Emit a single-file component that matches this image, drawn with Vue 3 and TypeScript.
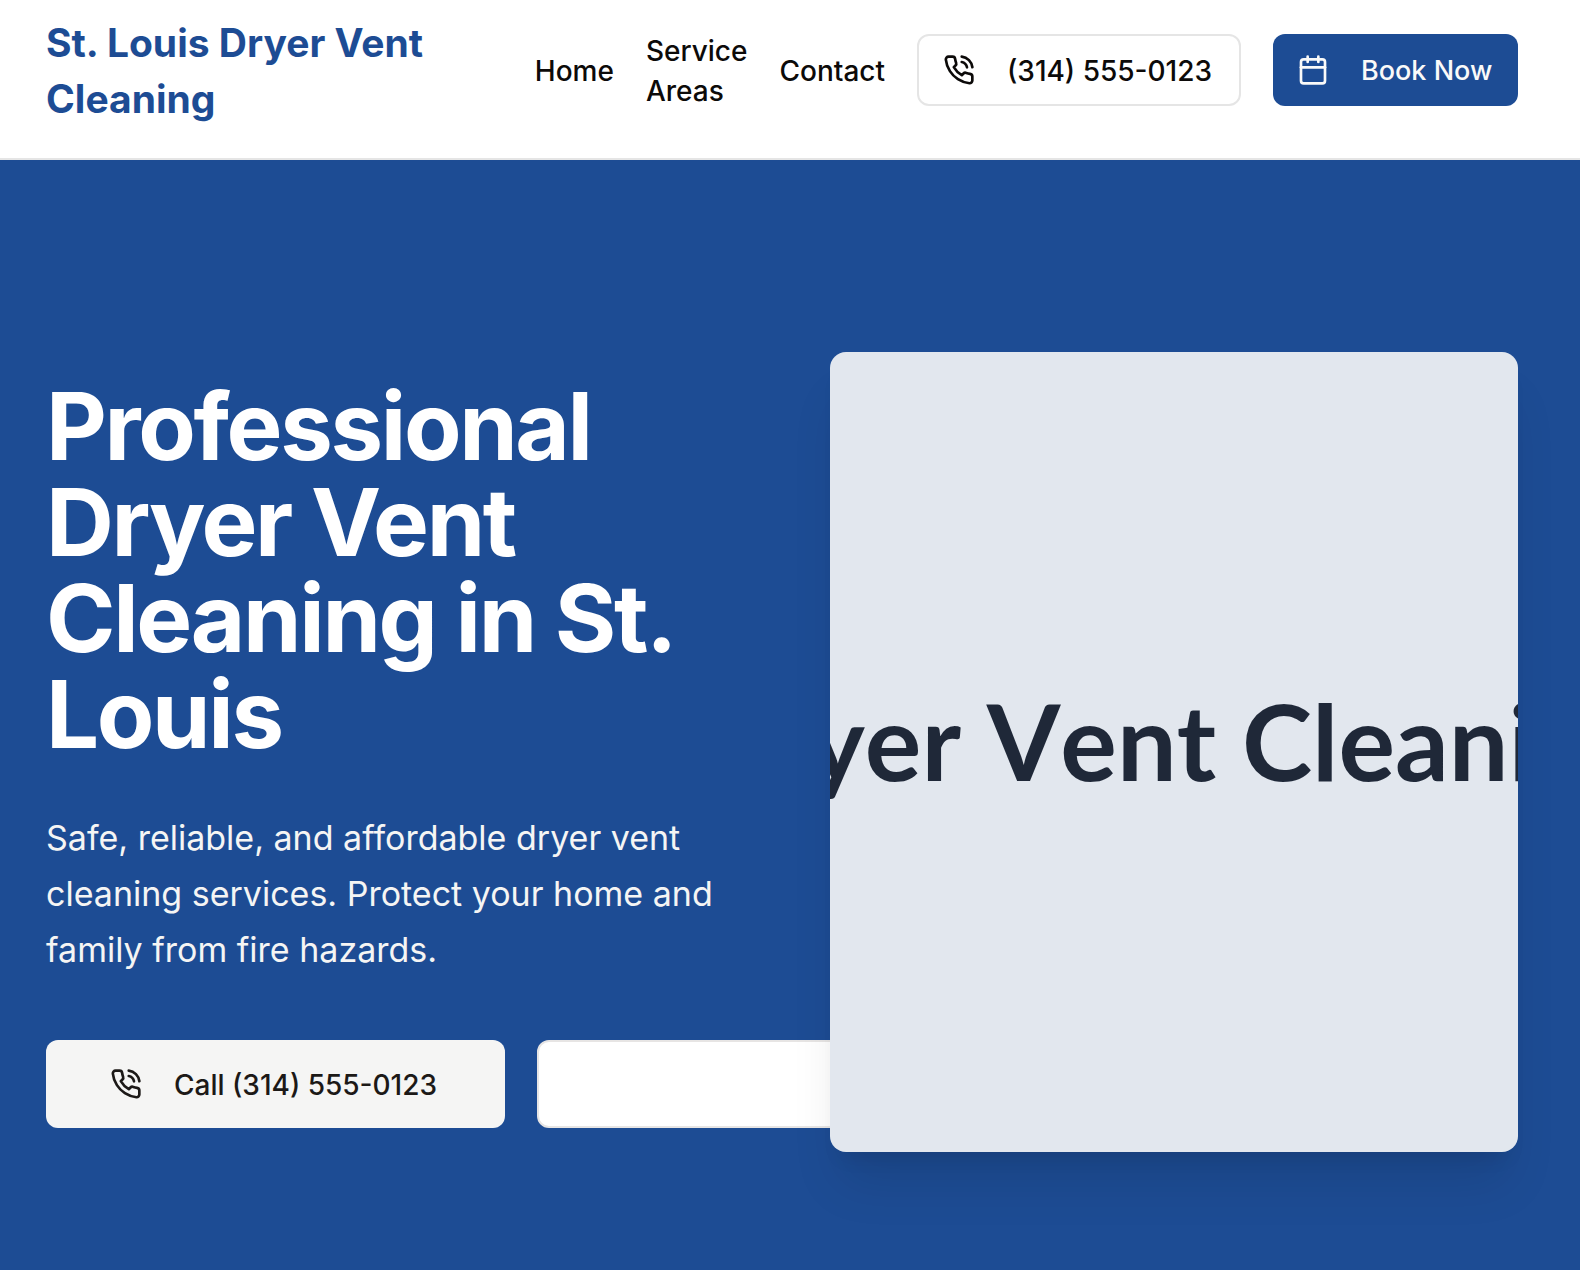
<script setup lang="ts">
interface NavLink {
  label: string
  href: string
}

const phone = '(314) 555-0123'
const phoneHref = 'tel:+13145550123'

const links: NavLink[] = [
  { label: 'Home', href: '#home' },
  { label: 'Service Areas', href: '#areas' },
  { label: 'Contact', href: '#contact' },
]
</script>

<template>
  <div class="page">
    <header class="header">
      <a class="brand" href="#home">St. Louis Dryer Vent Cleaning</a>
      <nav class="nav">
        <a v-for="link in links" :key="link.href" class="nav-link" :href="link.href">{{ link.label }}</a>
        <a class="btn btn-outline" :href="phoneHref">
          <svg class="icon" viewBox="0 0 24 24" aria-hidden="true">
            <path d="M22 16.92v3a2 2 0 0 1-2.18 2 19.79 19.79 0 0 1-8.63-3.07 19.5 19.5 0 0 1-6-6 19.79 19.79 0 0 1-3.07-8.67A2 2 0 0 1 4.11 2h3a2 2 0 0 1 2 1.72 12.84 12.84 0 0 0 .7 2.81 2 2 0 0 1-.45 2.11L8.09 9.91a16 16 0 0 0 6 6l1.27-1.27a2 2 0 0 1 2.11-.45 12.84 12.84 0 0 0 2.81.7A2 2 0 0 1 22 16.92z" />
            <path d="M14.05 2a9 9 0 0 1 8 7.94" />
            <path d="M14.05 6A5 5 0 0 1 18 10" />
          </svg>
          <span class="btn-label">{{ phone }}</span>
        </a>
        <button class="btn btn-primary" type="button">
          <svg class="icon" viewBox="0 0 24 24" aria-hidden="true">
            <path d="M8 2v4" />
            <path d="M16 2v4" />
            <rect width="18" height="18" x="3" y="4" rx="2" />
            <path d="M3 10h18" />
          </svg>
          <span class="btn-label">Book Now</span>
        </button>
      </nav>
    </header>

    <main id="home" class="hero">
      <div class="intro">
        <h1 class="title">Professional Dryer Vent Cleaning in St. Louis</h1>
        <p class="lead">
          Safe, reliable, and affordable dryer vent cleaning services. Protect your home and family from fire hazards.
        </p>
        <div class="actions">
          <a class="btn btn-large btn-soft" :href="phoneHref">
            <svg class="icon" viewBox="0 0 24 24" aria-hidden="true">
              <path d="M22 16.92v3a2 2 0 0 1-2.18 2 19.79 19.79 0 0 1-8.63-3.07 19.5 19.5 0 0 1-6-6 19.79 19.79 0 0 1-3.07-8.67A2 2 0 0 1 4.11 2h3a2 2 0 0 1 2 1.72 12.84 12.84 0 0 0 .7 2.81 2 2 0 0 1-.45 2.11L8.09 9.91a16 16 0 0 0 6 6l1.27-1.27a2 2 0 0 1 2.11-.45 12.84 12.84 0 0 0 2.81.7A2 2 0 0 1 22 16.92z" />
              <path d="M14.05 2a9 9 0 0 1 8 7.94" />
              <path d="M14.05 6A5 5 0 0 1 18 10" />
            </svg>
            <span class="btn-label">Call {{ phone }}</span>
          </a>
          <button class="btn btn-large btn-blank" type="button" aria-label="Book"></button>
        </div>
      </div>
      <div class="picture">
        <span class="picture-text">Dryer Vent Cleaning</span>
      </div>
    </main>
  </div>
</template>

<style>
body {
  margin: 0;
}
</style>

<style scoped>
.page {
  --blue: #1d4c94;
  min-height: 100vh;
  display: flex;
  flex-direction: column;
  overflow-x: hidden;
  background: #fff;
  color: #0c0a09;
  font-family: Inter, "Liberation Sans", sans-serif;
}

.page * {
  box-sizing: border-box;
}

.header {
  display: flex;
  align-items: center;
  justify-content: space-between;
  gap: 32px;
  padding: 13px 62px 31px 46px;
  border-bottom: 2px solid #e5e5e5;
}

.brand {
  flex: 1;
  padding-top: 2px;
  color: var(--blue);
  font-size: 39px;
  font-weight: 700;
  line-height: 56px;
  text-decoration: none;
}

.nav {
  display: flex;
  flex-shrink: 0;
  align-items: center;
  gap: 32px;
}

.nav-link {
  width: min-content;
  padding-top: 2px;
  color: inherit;
  font-size: 28px;
  font-weight: 500;
  line-height: 40px;
  text-decoration: none;
}

.btn {
  display: inline-flex;
  flex-shrink: 0;
  align-items: center;
  gap: 32px;
  height: 72px;
  padding: 0 24px;
  border: 0;
  border-radius: 12px;
  font-family: inherit;
  font-size: 28px;
  font-weight: 500;
  line-height: 40px;
  text-decoration: none;
  white-space: nowrap;
}

.btn-label {
  padding-top: 2px;
}

.btn-outline {
  min-width: 324px;
  border: 2px solid #e5e5e5;
  background: #fff;
  color: inherit;
}

.btn-primary {
  min-width: 245px;
  background: var(--blue);
  color: #fafaf9;
  font-size: 27px;
}

.btn-large {
  height: 88px;
  padding: 0 64px;
}

.btn-soft {
  min-width: 459px;
  background: #f5f5f4;
  color: #1c1917;
}

.btn-blank {
  width: 400px;
  border: 2px solid #e7e5e4;
  background: #fff;
}

.icon {
  width: 32px;
  height: 32px;
  fill: none;
  stroke: currentColor;
  stroke-width: 2;
  stroke-linecap: round;
  stroke-linejoin: round;
}

.hero {
  flex: 1;
  display: grid;
  grid-template-columns: minmax(0, 1fr) minmax(0, 1fr);
  gap: 96px;
  align-items: center;
  align-content: start;
  padding: 192px 62px 118px 46px;
  background: var(--blue);
}

.title {
  margin: 0;
  padding-top: 2px;
  color: #fff;
  font-size: 94px;
  font-weight: 700;
  line-height: 96px;
  letter-spacing: -0.025em;
}

.lead {
  margin: 48px 0 62px;
  color: #f5f5f4;
  font-size: 34px;
  line-height: 56px;
}

.actions {
  display: flex;
  gap: 32px;
}

.picture {
  position: relative;
  display: flex;
  align-items: center;
  justify-content: center;
  height: 800px;
  padding: 0 8px 24px 0;
  overflow: hidden;
  border-radius: 16px;
  background: #e2e7ee;
  box-shadow: 0 40px 50px -10px rgb(0 0 0 / 10%), 0 16px 20px -12px rgb(0 0 0 / 10%);
}

.picture-text {
  flex-shrink: 0;
  color: #1f2838;
  font-family: Lato, sans-serif;
  font-size: 106px;
  font-weight: 700;
  font-kerning: none;
  line-height: 128px;
  white-space: nowrap;
}
</style>
